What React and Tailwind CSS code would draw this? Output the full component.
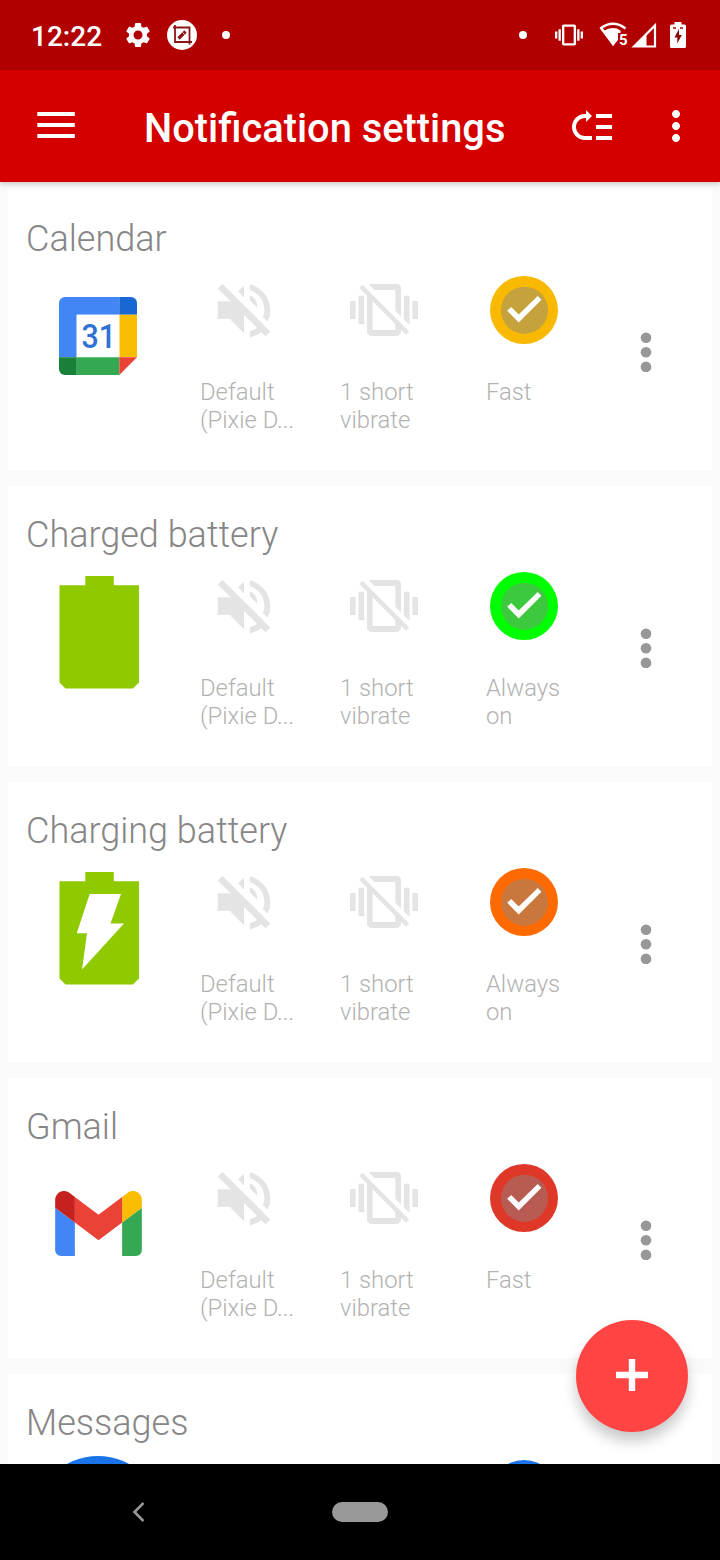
import { MdSettings, MdVibration, MdMoreVert } from "react-icons/md";

const CalendarIcon = () => (
  <svg className="w-[78px] h-[78px]" viewBox="0 0 78 78">
    <path d="M6 0H60.3V17.7H17.7V60.3H0V6A6 6 0 0 1 6 0z" fill="#4285f4" />
    <path d="M60.3 0H72A6 6 0 0 1 78 6V17.7H60.3z" fill="#1967d2" />
    <path d="M60.3 17.7H78V60.3H60.3z" fill="#fbbc04" />
    <path d="M17.7 17.7H60.3V60.3H17.7z" fill="#fff" />
    <path d="M17.7 60.3H60.3V78H17.7z" fill="#34a853" />
    <path d="M0 60.3H17.7V78H6A6 6 0 0 1 0 72z" fill="#188038" />
    <path d="M60.3 60.3H78L60.3 78z" fill="#ea4335" />
    <text
      x="22.6"
      y="51.3"
      textLength="34.5"
      lengthAdjust="spacingAndGlyphs"
      fontFamily="Roboto, sans-serif"
      fontWeight="500"
      fontSize="34"
      fill="#2f72d6"
    >
      31
    </text>
  </svg>
);

const BatteryIcon = ({ charging }) => (
  <svg className="w-32 h-32" viewBox="0 0 128 128">
    <path
      d="M51.3 8H79.8V17.3H105V114.5L99 120.5H31.5L25.5 114.5V17.3H51.3z"
      fill="#8fca00"
    />
    {charging && (
      <path d="M55.7 30H87L76.5 59.5H90L48 105.5L53 69.2H42.7z" fill="#fff" />
    )}
  </svg>
);

const GmailIcon = () => (
  <svg className="w-[87px] h-[65px] ml-px mb-px" viewBox="52 42 88 66">
    <path fill="#4285f4" d="M58 108h14V74L52 59v43c0 3.32 2.69 6 6 6" />
    <path fill="#34a853" d="M120 108h14c3.32 0 6-2.69 6-6V59l-20 15" />
    <path fill="#fbbc04" d="M120 48v26l20-15v-8c0-7.42-8.47-11.65-14.4-7.2" />
    <path fill="#ea4335" d="M72 74V48l24 18 24-18v26L96 92" />
    <path fill="#c5221f" d="M52 51v8l20 15V48l-5.6-4.2c-5.94-4.45-14.4-.22-14.4 7.2" />
  </svg>
);

const MessagesIcon = () => <div className="w-32 h-32 rounded-full bg-[#1a73e8]"></div>;

const SoundOffIcon = () => (
  <svg className="w-[70px] h-[70px] -my-px shrink-0" viewBox="0 0 24 24" fill="#e4e4e4">
    <path d="M4.6 3L3 4.6 7.4 9H3v6h4l5 5v-6.4l4.5 4.5c-.75.5-1.6.95-2.5 1.2v2.1c1.45-.33 2.8-1 3.95-1.9L19.4 21 21 19.4z" />
    <path d="M12 3.6L10 5.6 12 7.7z" />
    <path d="M14 6.9C15.6 7.6 16.6 9 16.6 11.2L14 8.7z" />
    <path d="M14 3.2c4 .9 7 4.5 7 8.8 0 1.4-.33 2.75-.95 3.95L18.5 14.4c.32-.75.5-1.55.5-2.4 0-3.2-2.1-5.9-5-6.75z" />
  </svg>
);

const VibrateOffIcon = () => (
  <svg className="w-[68px] h-[68px] shrink-0" viewBox="0 0 24 24" fill="#e4e4e4">
    <mask id="slash">
      <path d="M0 0H24V24H0z" fill="#fff" />
      <path d="M-1 -4.7V-1L25 25V21.3z" fill="#000" />
    </mask>
    <g mask="url(#slash)">
      <path d="M0 15.2h2V8.8H0zM3 17h2V7H3zM22 8.8v6.4h2V8.8zM19 17h2V7h-2z" />
      <path
        fillRule="evenodd"
        d="M16.5 2.8h-9C6.67 2.8 6 3.47 6 4.3v15.4c0 .83.67 1.5 1.5 1.5h9c.83 0 1.5-.67 1.5-1.5V4.3c0-.83-.67-1.5-1.5-1.5zM16 19.1H8V4.9h8z"
      />
    </g>
    <path d="M3.3 4.2L4.4 3.1L20.9 19.6L19.8 20.7z" />
  </svg>
);

const LedIcon = ({ color }) => (
  <svg className="w-[68px] h-[68px] shrink-0" viewBox="0 0 68 68">
    <circle cx="34" cy="34" r="34" fill={color} />
    <circle cx="34.5" cy="34.3" r="23.6" fill="#888" opacity="0.45" />
    <path d="M17.2 34.8L21.2 30.9L28.7 38.6L47.7 19.9L51.4 23.7L28.7 46.6z" fill="#fff" />
  </svg>
);

const DotsIcon = () => (
  <svg className="w-3 h-10" viewBox="0 0 12 40" fill="#979797">
    <circle cx="6" cy="5.7" r="5.3" />
    <circle cx="6" cy="20.3" r="5.3" />
    <circle cx="6" cy="34.9" r="5.3" />
  </svg>
);

const apps = [
  {
    name: "Calendar",
    icon: <CalendarIcon />,
    color: "#f9b900",
    sound: ["Default", "(Pixie D..."],
    vibrate: ["1 short", "vibrate"],
    light: ["Fast"],
  },
  {
    name: "Charged battery",
    icon: <BatteryIcon />,
    color: "#00ff00",
    sound: ["Default", "(Pixie D..."],
    vibrate: ["1 short", "vibrate"],
    light: ["Always", "on"],
  },
  {
    name: "Charging battery",
    icon: <BatteryIcon charging />,
    color: "#ff6a00",
    sound: ["Default", "(Pixie D..."],
    vibrate: ["1 short", "vibrate"],
    light: ["Always", "on"],
  },
  {
    name: "Gmail",
    icon: <GmailIcon />,
    color: "#df3828",
    sound: ["Default", "(Pixie D..."],
    vibrate: ["1 short", "vibrate"],
    light: ["Fast"],
  },
  { name: "Messages", icon: <MessagesIcon />, color: "#1a73e8" },
];

const StatusBar = () => (
  <div className="h-[70px] shrink-0 bg-[#b00000] text-white flex items-center justify-between pl-[31px] pr-[34px]">
    <div className="flex items-center">
      <span className="w-[92px] text-[28px] leading-none font-medium pt-1">12:22</span>
      <MdSettings className="w-[30px] h-[30px]" />
      <svg className="w-[30px] h-[30px] ml-[14px]" viewBox="0 0 30 30">
        <circle cx="15" cy="15" r="15" fill="#fff" />
        <g fill="none" stroke="#8c1414" strokeWidth="1.8">
          <path d="M6 7.5H22.5V24.5M8 5V22H25" />
          <path d="M11.5 18.5L18.5 11.5" strokeWidth="3.2" />
        </g>
        <path d="M15.5 12.5L17.5 14.5" stroke="#fff" strokeWidth="0.8" />
      </svg>
      <div className="w-2 h-2 rounded-full bg-white ml-[25px]"></div>
    </div>
    <div className="flex items-center">
      <div className="w-2 h-2 rounded-full bg-white mr-7"></div>
      <MdVibration className="w-7 h-7 mr-4" />
      <svg className="w-[30px] h-[26px] mr-0.5" viewBox="0 0 30 26">
        <path d="M1.5 6.5Q14 -3 26.5 6.5" fill="none" stroke="#fff" strokeWidth="2.4" />
        <path d="M0.5 6L14 24L16 21.5L2.5 4.5z" fill="#fff" />
        <path d="M4.5 9Q14 3.5 21.5 8.5V11H19V18L14 24z" fill="#fff" />
        <text x="20" y="22.5" fontFamily="Roboto, sans-serif" fontWeight="700" fontSize="15" fill="#fff">
          5
        </text>
      </svg>
      <svg className="w-[26px] h-[26px] mr-[13px]" viewBox="0 0 26 26">
        <path d="M3 24.5L24 3.5V24.5z" fill="none" stroke="#fff" strokeWidth="2.2" />
        <path d="M1.5 25L15.5 12V25z" fill="#fff" />
      </svg>
      <svg className="w-4 h-[26px]" viewBox="0 0 16 26">
        <path d="M4.5 0H11.5V2.5H14.5Q16 2.5 16 4V24.5Q16 26 14.5 26H1.5Q0 26 0 24.5V4Q0 2.5 1.5 2.5H4.5z" fill="#fff" />
        <path d="M9 7L4.5 15.5H7.3V21.5L11.8 13H9z" fill="#8c0000" />
        <path d="M3 6H6M10 6H13" stroke="#b00000" strokeWidth="1.4" />
      </svg>
    </div>
  </div>
);

const AppBar = () => (
  <header className="relative z-10 h-28 shrink-0 bg-[#d40000] text-white flex items-center pl-8 pr-5 shadow-[0_2px_5px_rgba(0,0,0,0.2)]">
    <svg className="w-12 h-12" viewBox="0 0 48 48">
      <path d="M5.3 12h37.5M5.3 23h37.5M5.3 34h37.5" stroke="#fff" strokeWidth="3.9" />
    </svg>
    <h1 className="flex-1 pl-16 pt-1.5 text-[39.8px] leading-none font-medium whitespace-nowrap">
      Notification settings
    </h1>
    <svg className="w-12 h-12" viewBox="0 0 24 24" fill="#fff">
      <path
        transform="matrix(1 0 0 -1 0 24)"
        d="M14 5h8v2h-8zm0 5.5h8v2h-8zm0 5.5h8v2h-8zM2 11.5C2 15.08 4.92 18 8.5 18H9v2l3-3-3-3v2h-.5C6.02 16 4 13.98 4 11.5S6.02 7 8.5 7H12V5H8.5C4.92 5 2 7.92 2 11.5z"
      />
    </svg>
    <MdMoreVert className="w-12 h-12 ml-9" />
  </header>
);

const Caption = ({ lines }) => (
  <p className="mt-[34px]">
    {lines.map((line) => (
      <span key={line} className="block">
        {line}
      </span>
    ))}
  </p>
);

const AppCard = ({ app }) => (
  <section className="h-[280px] shrink-0 bg-white flex flex-col pt-[26px]">
    <h2 className="h-14 pl-[18px] text-[36px] leading-[46px] font-light text-[#868686]">{app.name}</h2>
    <div className="flex pl-[26px] text-[23.8px] leading-7 font-light text-[#b2b2b2]">
      <div className="w-32 h-32 flex items-center justify-center">{app.icon}</div>
      <div className="w-[140px] ml-[38px] pt-1">
        <div className="w-[88px] flex justify-center">
          <SoundOffIcon />
        </div>
        {app.sound && <Caption lines={app.sound} />}
      </div>
      <div className="w-[146px] pt-1">
        <div className="w-[88px] flex justify-center">
          <VibrateOffIcon />
        </div>
        {app.vibrate && <Caption lines={app.vibrate} />}
      </div>
      <div className="w-[84px] pt-1">
        <div className="pl-1">
          <LedIcon color={app.color} />
        </div>
        {app.light && <Caption lines={app.light} />}
      </div>
      <button className="flex justify-center items-start w-12 ml-[52px] pt-[60px]">
        <DotsIcon />
      </button>
    </div>
  </section>
);

const NavBar = () => (
  <nav className="h-24 shrink-0 bg-black flex items-center">
    <svg className="w-3 h-5 ml-[132px]" viewBox="0 0 12 20">
      <path d="M11.5 1L2.5 10L11.5 19" fill="none" stroke="#999" strokeWidth="2.6" />
    </svg>
    <div className="w-14 h-5 rounded-full bg-[#999] ml-[188px]"></div>
  </nav>
);

const App = () => {
  return (
    <div className="relative w-[720px] h-[1560px] flex flex-col overflow-hidden bg-[#fafafa] font-[Roboto,sans-serif]">
      <StatusBar />
      <AppBar />
      <main className="flex-1 min-h-0 overflow-hidden flex flex-col gap-4 px-2 pt-2">
        {apps.map((app) => (
          <AppCard key={app.name} app={app} />
        ))}
      </main>
      <NavBar />
      <button className="absolute right-8 bottom-[128px] w-28 h-28 rounded-full bg-[#ff4444] flex items-center justify-center shadow-[0_9px_14px_rgba(0,0,0,0.22)]">
        <svg className="w-8 h-8 mb-0.5" viewBox="0 0 32 32">
          <path d="M0 16H32M16 0V32" stroke="#fff" strokeWidth="6.4" />
        </svg>
      </button>
    </div>
  );
};

export default App;
